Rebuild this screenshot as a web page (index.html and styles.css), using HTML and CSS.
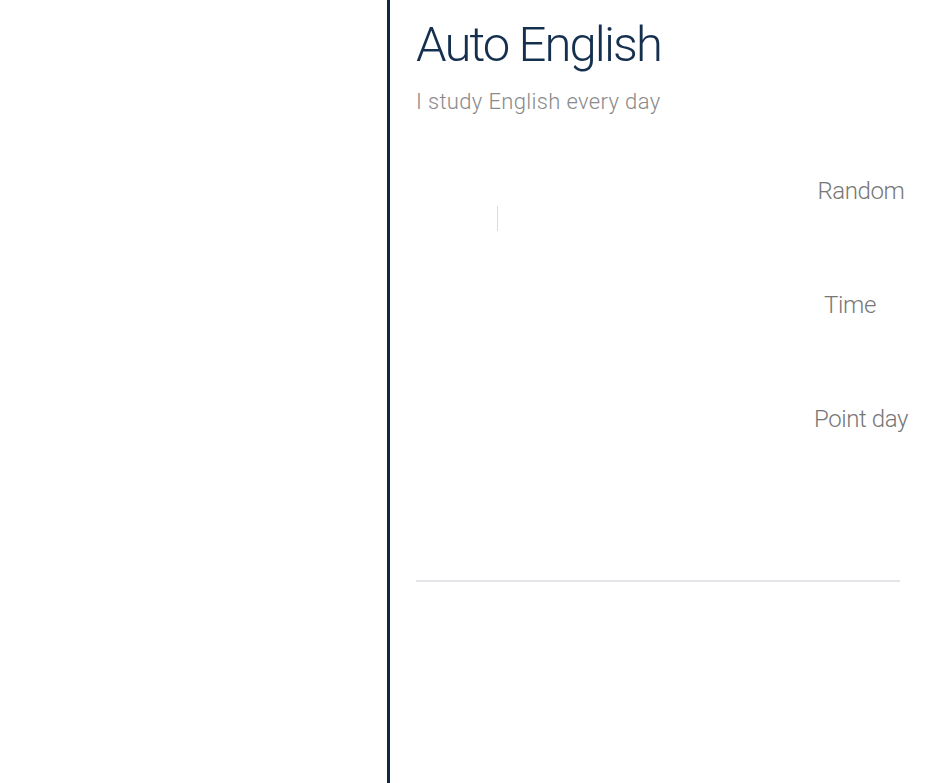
FILE: index.html
```html
<!DOCTYPE html>
<html>
<head>
<meta charset="utf-8">
<link rel="stylesheet" href="styles.css">
</head>
<body>
<div class="layout">
  <aside class="side"></aside>
  <main class="main">
    <h1 class="title">Auto English</h1>
    <p class="subtitle">I study English every day</p>
    <div class="panel">
      <div class="left">
        <div class="caret"></div>
      </div>
      <ul class="options">
        <li class="opt opt-random">Random</li>
        <li class="opt opt-time">Time</li>
        <li class="opt opt-point">Point day</li>
      </ul>
    </div>
    <div class="rule"></div>
  </main>
</div>
</body>
</html>
```
FILE: styles.css
```css
* { box-sizing: border-box; }
html, body { margin: 0; padding: 0; background: #fff; }
body {
  font-family: Roboto, "Liberation Sans", sans-serif;
  font-weight: 300;
  width: 938px;
  height: 783px;
  overflow: hidden;
}
.layout {
  display: flex;
  height: 783px;
}
.side {
  width: 387px;
  flex: none;
}
.main {
  flex: 1;
  border-left: 3px solid #0f2844;
  padding-left: 26px;
  display: flex;
  flex-direction: column;
}
.title {
  margin: 16px 0 0;
  font-size: 49px;
  font-weight: 300;
  line-height: 58px;
  color: #15304f;
  letter-spacing: -1.9px;
}
.subtitle {
  margin: 15px 0 0;
  font-size: 22px;
  line-height: 26px;
  color: #8a8a8a;
  letter-spacing: 0.35px;
}
.panel {
  display: flex;
  justify-content: space-between;
  margin-top: 51px;
  height: 414px;
}
.left {
  padding-left: 81px;
  padding-top: 40px;
}
.caret {
  width: 1px;
  height: 25px;
  background: #dcdcdc;
}
.options {
  list-style: none;
  margin: 0;
  padding: 11px 0 0;
  width: 104px;
  display: flex;
  flex-direction: column;
  gap: 86px;
  margin-right: 25px;
}
.opt {
  font-size: 24px;
  line-height: 28px;
  color: #777;
  text-align: center;
  letter-spacing: -0.4px;
}
.opt-time { padding-right: 22px; }
.rule {
  width: 484px;
  height: 2px;
  background: #e6e6ea;
}
```
